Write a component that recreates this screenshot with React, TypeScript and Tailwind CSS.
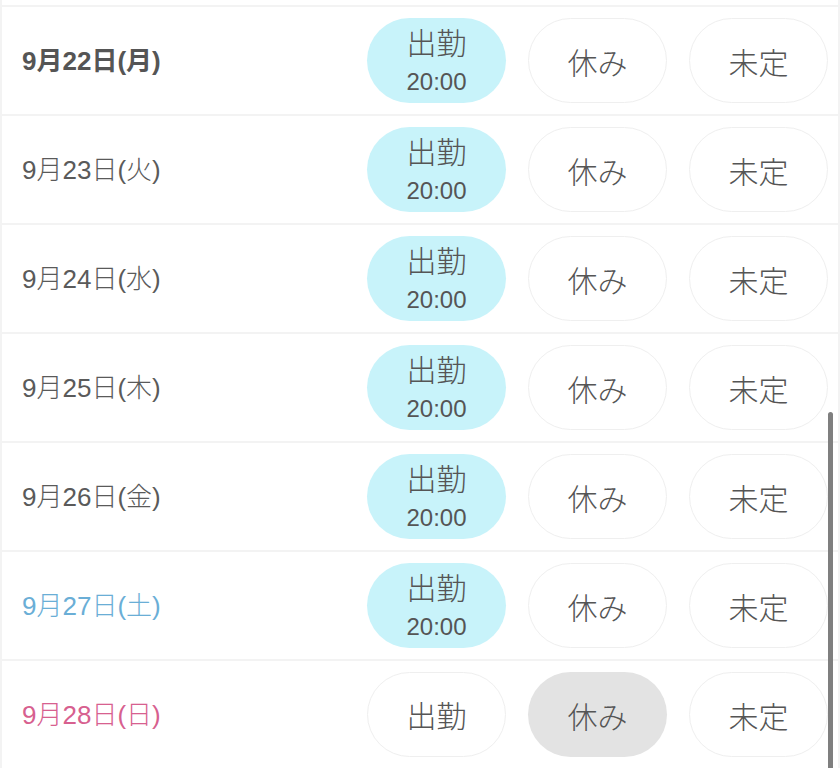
const rows = [
  { date: "9月22日(月)", tone: "today", choice: "work" },
  { date: "9月23日(火)", tone: "normal", choice: "work" },
  { date: "9月24日(水)", tone: "normal", choice: "work" },
  { date: "9月25日(木)", tone: "normal", choice: "work" },
  { date: "9月26日(金)", tone: "normal", choice: "work" },
  { date: "9月27日(土)", tone: "sat", choice: "work" },
  { date: "9月28日(日)", tone: "sun", choice: "off" },
];

const dateClass: Record<string, string> = {
  today: "font-bold text-[#555555]",
  normal: "font-light text-[#5a5a5a]",
  sat: "font-light text-[#6aaed6]",
  sun: "font-light text-[#d7608f]",
};

function Pill({ active, activeClass, children }: { active: boolean; activeClass: string; children: React.ReactNode }) {
  return (
    <button
      className={
        "flex h-[85px] w-[139px] flex-col items-center justify-center rounded-full pt-[5px] font-light text-[#555555] " +
        (active ? activeClass : "border border-[#efefef] bg-white")
      }
    >
      {children}
    </button>
  );
}

export default function App() {
  return (
    <div
      className="relative h-[768px] w-[840px] overflow-hidden bg-[#f3f3f3]"
      style={{ fontFamily: '"Liberation Sans", "Noto Sans CJK JP", sans-serif' }}
    >
      <div className="flex flex-col gap-[2px] px-[2px]">
        <div className="h-[5px] bg-white" />
        {rows.map((row) => (
          <div key={row.date} className="flex h-[107px] shrink-0 items-center bg-white pl-[20px] pr-[10px]">
            <span className={"flex-1 pt-[2px] text-[26px] " + dateClass[row.tone]}>{row.date}</span>
            <div className="flex gap-[22px]">
              <Pill active={row.choice === "work"} activeClass="bg-[#c8f3fa]">
                <span className="text-[30px] leading-[38px]">出勤</span>
                {row.choice === "work" ? <span className="text-[24px] leading-[38px]">20:00</span> : null}
              </Pill>
              <Pill active={row.choice === "off"} activeClass="bg-[#e3e3e3]">
                <span className="text-[30px]">休み</span>
              </Pill>
              <Pill active={false} activeClass="">
                <span className="text-[30px]">未定</span>
              </Pill>
            </div>
          </div>
        ))}
      </div>
      <div className="absolute left-[828px] top-[412px] h-[370px] w-[5px] rounded-full bg-[#7f7f7f]" />
    </div>
  );
}
